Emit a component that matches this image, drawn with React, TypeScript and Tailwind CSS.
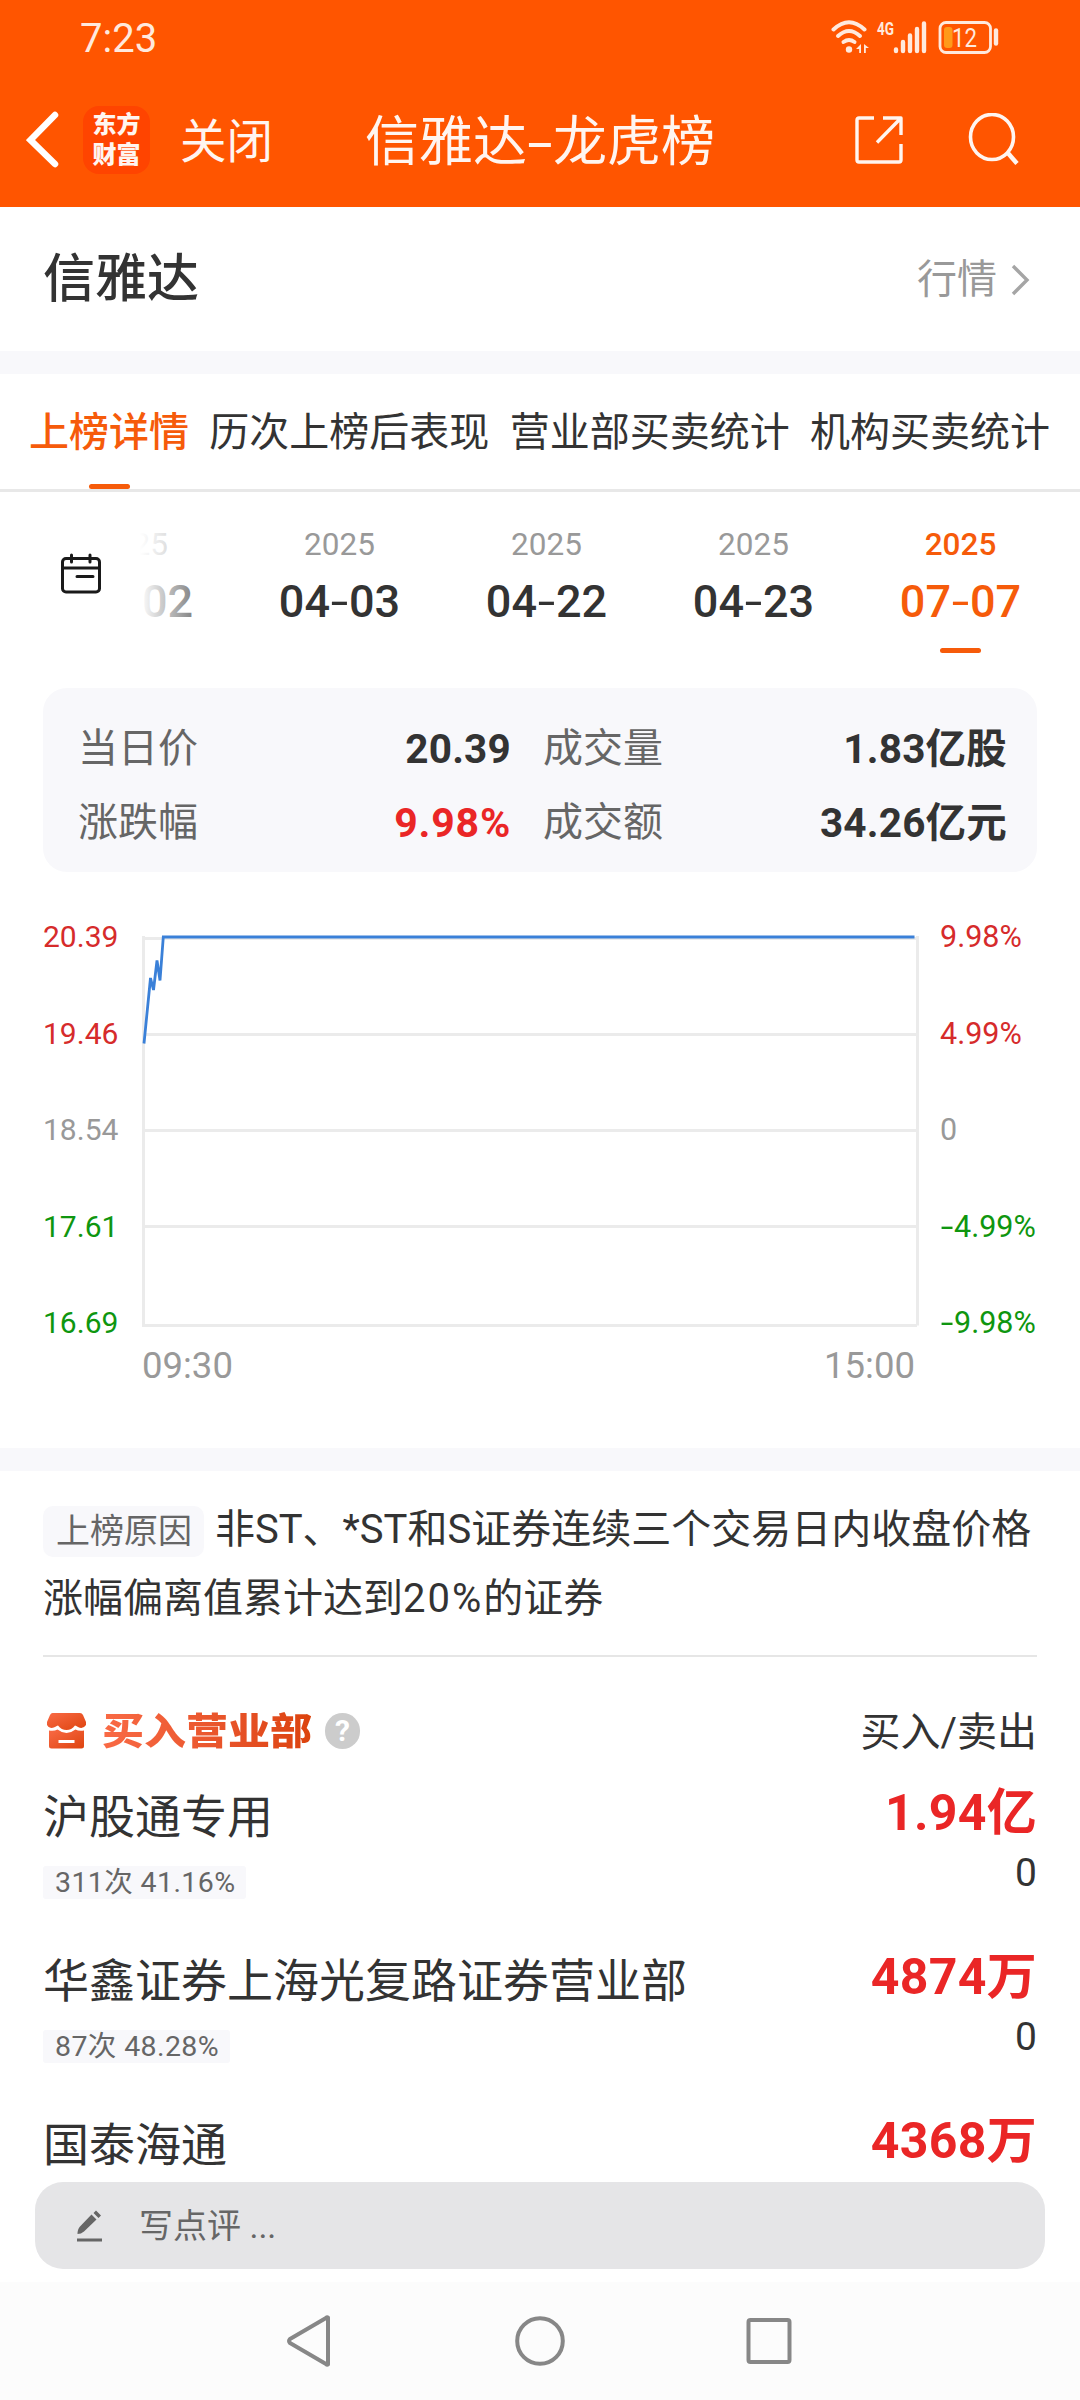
import type { ReactNode } from "react";

const tabs = ["上榜详情", "历次上榜后表现", "营业部买卖统计", "机构买卖统计"];
const dates = ["04-02", "04-03", "04-22", "04-23", "07-07"];
const axis = [
  { price: "20.39", pct: "9.98%", cls: "text-[#d62b2b]" },
  { price: "19.46", pct: "4.99%", cls: "text-[#d62b2b]" },
  { price: "18.54", pct: "0", cls: "text-[#999999]" },
  { price: "17.61", pct: "-4.99%", cls: "text-[#0f960f]" },
  { price: "16.69", pct: "-9.98%", cls: "text-[#0f960f]" },
];
const rows = [
  { name: "沪股通专用", tag: "311次 41.16%", buy: "1.94亿", sell: "0" },
  { name: "华鑫证券上海光复路证券营业部", tag: "87次 48.28%", buy: "4874万", sell: "0" },
  { name: "国泰海通", tag: "", buy: "4368万", sell: "" },
];

function StatusIcons() {
  return (
    <svg width="180" height="40" viewBox="825 16 180 40" fill="none" className="block">
      <g stroke="#ffe9dd" strokeWidth="4" strokeLinecap="round">
        <path d="M833.500 29.500Q849 15 864.500 29.500" />
        <path d="M838 36Q849 26 860 36" />
        <path d="M843.500 42Q849 38 854.500 42" />
      </g>
      <circle cx="849" cy="49.500" r="3.200" fill="#ffe9dd" />
      <path d="M856 49l5-5v9h-1.800v-4zM869 48l-5-4v9h1.800v-5z" fill="#ffe9dd" />
      <text x="877" y="35" fontSize="19" fontWeight="700" fill="#ffe9dd" textLength="17" lengthAdjust="spacingAndGlyphs" fontFamily="Roboto, sans-serif">4G</text>
      <g stroke="#ffe9dd" strokeWidth="4.400" strokeLinecap="round">
        <path d="M896 49.500V51M903 42V51M910 35.500V51M917 29V51M924 23.500V51" />
      </g>
      <rect x="940" y="22.500" width="50.500" height="30" rx="6" stroke="#ffe9dd" strokeWidth="2.800" />
      <rect x="944" y="27" width="8.500" height="21" rx="3" fill="#ff9a1a" />
      <text x="952" y="46.500" fontSize="26" fill="#ffe9dd" textLength="25" lengthAdjust="spacingAndGlyphs" fontFamily="Roboto, sans-serif">12</text>
      <path d="M996 30.500V43.500" stroke="#ffe9dd" strokeWidth="4.400" strokeLinecap="round" />
    </svg>
  );
}

function Header() {
  return (
    <header className="h-[207px] bg-[#ff5500] text-[#fff5f0]">
      <div className="flex h-[74px] items-start justify-between pl-[80px] pr-[75px] pt-4">
        <span className="text-[40px] leading-[46px] text-[#ffe9dd]">7:23</span>
        <StatusIcons />
      </div>
      <div className="flex h-[132px] items-center">
        <svg width="34" height="60" viewBox="0 0 34 60" fill="none" className="ml-[26px]">
          <path d="M29 5L4.500 30L29 54" stroke="#fff" strokeWidth="6.500" strokeLinecap="round" />
        </svg>
        <div className="ml-[23px] flex h-[68px] w-[67px] flex-col items-center justify-center rounded-[16px] bg-[#ff4400] text-[24px] font-black leading-[30px]">
          <span>东方</span>
          <span>财富</span>
        </div>
        <span className="ml-[30px] mt-[4px] w-[93px] text-[46.500px] leading-[60px]">关闭</span>
        <h1 className="ml-[92px] mt-[5px] flex w-[352px] text-[54px] leading-[70px]">
          <span>信雅达</span>
          <span className="w-[26px] scale-x-[1.700] text-center">-</span>
          <span>龙虎榜</span>
        </h1>
        <svg width="52" height="52" viewBox="0 0 52 52" fill="none" stroke="#fff5f0" strokeWidth="3.400" strokeLinejoin="round" className="ml-[136px]">
          <path d="M21 4H6Q4 4 4 6V46Q4 48 6 48H46Q48 48 48 46V30" />
          <path d="M30 4H48V21M47 5L24 28.500" />
        </svg>
        <svg width="54" height="54" viewBox="0 0 54 54" fill="none" stroke="#fff5f0" strokeWidth="3.600" className="ml-[63px]">
          <ellipse cx="24" cy="24" rx="21.500" ry="22.500" />
          <path d="M39 39L49 50.500" strokeWidth="4.500" />
        </svg>
      </div>
    </header>
  );
}

function DateStrip() {
  return (
    <div className="flex h-[196px] items-start">
      <svg width="44" height="44" viewBox="0 0 44 44" fill="none" stroke="#1a1a1a" strokeWidth="3" className="ml-[59px] mt-[60px] shrink-0">
        <rect x="3.500" y="6.500" width="37" height="33.500" rx="3.500" />
        <path d="M3.500 16H40.500" />
        <path d="M12.500 3V10M31 3V10M18 24.500H34" strokeLinecap="round" />
      </svg>
      <div className="relative ml-[37px] h-[196px] w-[940px] overflow-hidden">
        <div className="-ml-[111px] flex">
          {dates.map((d, i) => {
            const on = i === dates.length - 1;
            return (
              <div key={d} className={on ? "flex w-[207px] shrink-0 flex-col items-center text-[#f65b0a]" : "flex w-[207px] shrink-0 flex-col items-center text-[#333333]"}>
                <span className={on ? "mt-[33px] text-[31.500px] font-medium leading-[40px]" : "mt-[33px] text-[31.500px] leading-[40px] text-[#999999]"}>2025</span>
                <span className="mt-[9px] text-[45px] font-medium leading-[56px]">
                  {d.slice(0, 2)}
                  <span className="inline-block w-[19px] scale-x-[1.400] text-center font-normal">-</span>
                  {d.slice(3)}
                </span>
                {on && <span className="mt-[18px] h-[5px] w-[41px] rounded-full bg-[#f65b0a]" />}
              </div>
            );
          })}
        </div>
        <div className="absolute left-0 top-0 h-full w-[88px] bg-gradient-to-r from-white to-white/0" />
      </div>
    </div>
  );
}

function Stat({ label, children, red }: { label: string; children: ReactNode; red?: boolean }) {
  return (
    <div className="flex justify-between">
      <span className="text-[#666666]">{label}</span>
      <span className={red ? "text-[41px] font-bold tracking-[0.8px] text-[#ea2626]" : "text-[40.500px] font-bold tracking-[0.2px] text-[#333333]"}>{children}</span>
    </div>
  );
}

function Chart() {
  return (
    <section className="flex h-[576px] flex-col">
      <div className="mt-[44px] flex h-[427px]">
        <div className="flex w-[142px] shrink-0 flex-col justify-between pl-[43px] pt-px text-[30px] leading-[40px]">
          {axis.map((a) => (
            <span key={a.price} className={a.cls}>{a.price}</span>
          ))}
        </div>
        <svg width="778" height="396" viewBox="142 934 778 396" fill="none" className="mt-[18px] block shrink-0">
          <path d="M143.500 936V1327M917.500 936V1325.500M142 938.500H919M142 1034.500H917M142 1130.500H917M142 1226.500H917M142 1325.500H917" stroke="#ebebeb" strokeWidth="3" />
          <path d="M144 1043.500L150.500 978L153.500 990L157 960.500L160 980.500L163.300 937H914.500" stroke="#3a80d8" strokeWidth="2.800" />
        </svg>
        <div className="flex flex-col justify-between pl-[20px] pt-px text-[30.500px] leading-[40px]">
          {axis.map((a) => (
            <span key={a.pct} className={a.cls}>
              {a.pct.startsWith("-") && <span className="inline-block w-[14px] scale-x-[1.500] text-center">-</span>}
              {a.pct.replace("-", "")}
            </span>
          ))}
        </div>
      </div>
      <div className="flex justify-between pl-[142px] pr-[165px] text-[36.500px] leading-[46px] text-[#999999]">
        <span>09:30</span>
        <span>15:00</span>
      </div>
    </section>
  );
}

function ListHeader() {
  return (
    <div className="flex h-[48px] items-center">
      <svg width="42" height="38" viewBox="0 0 42 38" className="ml-[3px]">
        <defs>
          <linearGradient id="shop" x1="0" y1="0" x2="1" y2="1">
            <stop offset="0" stopColor="#f96a45" />
            <stop offset="1" stopColor="#de440f" />
          </linearGradient>
        </defs>
        <path d="M6.500 1H34Q36 1 37 3L40 10V13Q37 17.500 32 15Q30 13.500 29 13.500Q25.500 18 20.500 18Q15.500 18 12 13.500Q11 13.500 9 15Q3 17.500 1 13V10L4 3Q5 1 6.500 1Z" fill="url(#shop)" />
        <path fillRule="evenodd" d="M3 18.500Q8 19.500 11.500 17.500Q16 21 20.500 21Q25 21 29.500 17.500Q33 19.500 38 18.500V34Q38 36.500 35.500 36.500H5.500Q3 36.500 3 34ZM12.500 28V31H28.500V28Z" fill="url(#shop)" />
      </svg>
      <h2 className="ml-[14px] mt-[3px] origin-center scale-y-[0.880] bg-gradient-to-r from-[#f96a45] to-[#dc430c] bg-clip-text text-[42px] font-black leading-[56px] text-transparent">买入营业部</h2>
      <span className="ml-[13px] flex h-[36px] w-[35px] items-center justify-center rounded-full bg-[#cccccc] text-[30px] font-bold leading-[36px] text-white">?</span>
      <span className="ml-auto mt-[3px] text-[40px] leading-[48px] text-[#333333]">买入/卖出</span>
    </div>
  );
}

function NavBar() {
  return (
    <nav className="flex h-[118px] shrink-0 items-center bg-[#fcfcfc] pl-[284px]">
      <svg width="50" height="56" viewBox="0 0 50 56" fill="none" stroke="#878787" strokeWidth="4" strokeLinejoin="round">
        <path d="M44 4.500V51.500Q43 52 42 51L6 30Q4 28 6 26L42 5Q43 4 44 4.500Z" />
      </svg>
      <svg width="52" height="52" viewBox="0 0 52 52" fill="none" stroke="#878787" strokeWidth="4" className="ml-[180px]">
        <circle cx="26" cy="26" r="22.800" />
      </svg>
      <svg width="50" height="50" viewBox="0 0 50 50" fill="none" stroke="#878787" strokeWidth="4" className="ml-[178px]">
        <rect x="4.500" y="4" width="41" height="42" rx="2" />
      </svg>
    </nav>
  );
}

export default function App() {
  return (
    <div className="flex h-[2400px] w-[1080px] flex-col overflow-hidden bg-white font-['Roboto','Noto_Sans_CJK_SC',sans-serif] text-[#333333]">
      <Header />
      <section className="flex h-[144px] items-center justify-between pl-[43px] pr-[49px] pt-[2px]">
        <span className="text-[52px] font-medium leading-[70px]">信雅达</span>
        <span className="flex items-center text-[40px] leading-[56px] text-[#999999]">
          行情
          <svg width="22" height="34" viewBox="0 0 22 34" fill="none" className="ml-[12px]">
            <path d="M4 3L18 17L4 31" stroke="#a5a5a5" strokeWidth="3.400" />
          </svg>
        </span>
      </section>
      <div className="h-[23px] bg-[#f8f8fb]" />
      <nav className="flex h-[118px] justify-between border-b-[3px] border-[#e8e8e8] pl-[29px] pr-[30px]">
        {tabs.map((t, i) => (
          <div key={t} className={i === 0 ? "flex flex-col items-center font-medium text-[#f65b0a]" : "flex flex-col items-center"}>
            <span className="mt-[29px] text-[40px] leading-[60px]">{t}</span>
            {i === 0 && <span className="mt-[21px] h-[5px] w-[41px] rounded-full bg-[#f65b0a]" />}
          </div>
        ))}
      </nav>
      <DateStrip />
      <section className="mx-[43px] grid h-[184px] grid-cols-[433px_464px] content-start gap-x-[32px] gap-y-[14px] rounded-[24px] bg-[#f8f8fb] pl-[35px] pt-[31px] text-[40px] leading-[60px]">
        <Stat label="当日价">20.39</Stat>
        <Stat label="成交量">1.83亿股</Stat>
        <Stat label="涨跌幅" red>9.98%</Stat>
        <Stat label="成交额">34.26亿元</Stat>
      </section>
      <Chart />
      <div className="h-[23px] shrink-0 bg-[#f8f8fb]" />
      <section className="mx-[43px] h-[186px] shrink-0 border-b-2 border-[#e6e6e6] pt-[24px]">
        <p className="text-[40px] leading-[69px]">
          <span className="mr-[11px] inline-block h-[51px] rounded-[10px] bg-[#f8f8fb] pl-[13px] pr-[12px] text-[34px] leading-[50px] text-[#666666]">上榜原因</span>
          非ST、*ST和S证券连续三个交易日内收盘价格涨幅偏离值累计达到<span className="tracking-[2px]">20%</span>的证券
        </p>
      </section>
      <section className="h-[525px] shrink-0 overflow-hidden px-[43px] pt-[50px]">
        <ListHeader />
        <div className="pt-[28px]">
          {rows.map((r) => (
            <div key={r.name} className="flex h-[164px] justify-between">
              <div className="flex flex-col items-start">
                <span className="mt-[4px] text-[46px] leading-[60px]">{r.name}</span>
                {r.tag && <span className="mt-[19px] h-[33px] rounded-[3px] bg-[#f8f8fb] pl-[12px] pr-[11px] text-[28.500px] leading-[33px] tracking-[0.4px] text-[#666666]">{r.tag}</span>}
              </div>
              <div className="flex flex-col items-end">
                <span className="text-[50px] font-bold leading-[60px] tracking-[0.3px] text-[#ea2626]">{r.buy}</span>
                <span className="mt-[7px] text-[39px] leading-[46px]">{r.sell}</span>
              </div>
            </div>
          ))}
        </div>
      </section>
      <div className="mx-[35px] mb-[13px] flex h-[87px] shrink-0 items-center rounded-[28px] bg-[#e5e5e7] text-[#666666]">
        <svg width="28" height="34" viewBox="0 0 28 34" className="ml-[41px]" fill="#666666">
          <path d="M1.500 25Q1.500 20 4 17.500L15.500 5.500L20.500 10.500L8 22.500Q5 25 1.500 25ZM17.500 4L20 1.500L25 6.500L22.500 9ZM1 29.500H26V32.500H1Z" />
        </svg>
        <span className="ml-[35px] text-[34px] leading-[50px]">写点评 ...</span>
      </div>
      <NavBar />
    </div>
  );
}
